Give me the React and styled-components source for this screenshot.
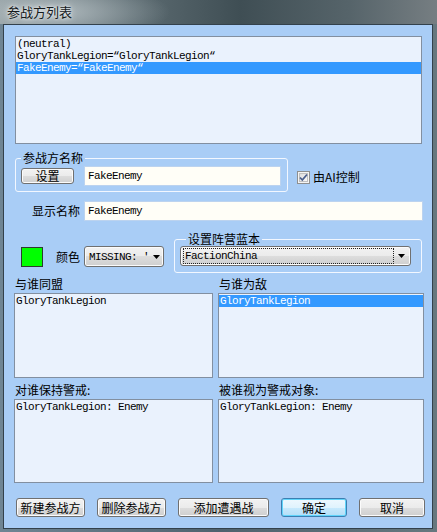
import React from 'react'
import styled, { createGlobalStyle } from 'styled-components'

const GlobalStyle = createGlobalStyle`
  html, body {
    margin: 0;
    padding: 0;
    width: 437px;
    height: 532px;
    overflow: hidden;
  }
  body {
    font-family: "Noto Sans CJK SC", "Liberation Sans", sans-serif;
    font-size: 12px;
    color: #000;
  }
`

const mono = `"Liberation Mono", "Noto Sans CJK SC", monospace`

const Window = styled.div`
  width: 437px;
  height: 532px;
  display: flex;
  flex-direction: column;
  background: linear-gradient(90deg, #6f8594 0%, #4f626e 50%, #66787f 100%);
`

const TitleBar = styled.div`
  height: 24px;
  flex-shrink: 0;
  display: flex;
  align-items: center;
  padding-left: 7px;
  background:
    radial-gradient(ellipse 120px 30px at 50px 12px, rgba(190, 200, 204, 0.8), rgba(190, 200, 204, 0) 100%),
    linear-gradient(90deg, #8b979b 0%, #5d6c72 30%, #3f4e54 55%, #56646a 80%, #767e82 100%);
`

const TitleText = styled.span`
  font-size: 13px;
  line-height: 16px;
  color: #151a1d;
  text-shadow: 0 0 6px rgba(255, 255, 255, 0.9), 0 0 3px rgba(255, 255, 255, 0.8);
`

const Client = styled.div`
  flex: 1;
  margin: 0 4px 3px 3px;
  background: #a9cdf6;
  border: 1px solid #33414c;
  padding: 11px 10px 0 11px;
  display: flex;
  flex-direction: column;
`

const ListBox = styled.div`
  box-sizing: border-box;
  width: ${p => p.$w}px;
  height: ${p => p.$h}px;
  background: #eaf2fd;
  border: 1px solid #828fa0;
  padding: 1px 0;
  font-family: ${mono};
  font-size: 11px;
  letter-spacing: -0.6px;
  overflow: hidden;
`

const ListItem = styled.div`
  height: 12px;
  line-height: 12px;
  padding-left: 1px;
  white-space: pre;
  background: ${p => (p.$selected ? '#3399ff' : 'transparent')};
  color: ${p => (p.$selected ? '#ffffff' : '#000000')};
`

const NameRow = styled.div`
  display: flex;
  align-items: flex-start;
  margin-top: 7px;
`

const GroupBox = styled.fieldset`
  box-sizing: border-box;
  width: ${p => p.$w}px;
  margin: 0;
  min-width: 0;
  border: 1px solid #f2f7ff;
  border-radius: 3px;
  padding: ${p => p.$pad};
  display: flex;
  align-items: center;
`

const Legend = styled.legend`
  margin-left: ${p => p.$offset}px;
  padding: 0 2px;
  line-height: 14px;
  font-size: 12px;
`

const Button = styled.button`
  box-sizing: border-box;
  width: ${p => p.$w}px;
  height: ${p => p.$h || 19}px;
  padding: 0;
  margin: 0;
  flex-shrink: 0;
  font-family: "Noto Sans CJK SC", sans-serif;
  font-size: 12px;
  line-height: 14px;
  color: #000;
  border-radius: 3px;
  border: 1px solid ${p => (p.$default ? '#3c7fb1' : '#707070')};
  box-shadow: inset 0 0 0 1px ${p => (p.$default ? '#5fd4fb' : '#fbfbfb')};
  background: ${p =>
    p.$default
      ? 'linear-gradient(#eef8fe 0%, #e0f3fd 50%, #c8eafd 50%, #b4def6 100%)'
      : 'linear-gradient(#f2f2f2 0%, #ebebeb 50%, #dddddd 50%, #cfcfcf 100%)'};
`

const TextInput = styled.div`
  box-sizing: border-box;
  width: ${p => p.$w}px;
  height: 20px;
  flex-shrink: 0;
  margin-left: ${p => p.$ml || 0}px;
  background: #fffef7;
  border: 1px solid #bcd3ef;
  padding: 3px 3px 0;
  font-family: ${mono};
  font-size: 11px;
  letter-spacing: -0.6px;
  line-height: 13px;
`

const CheckWrap = styled.label`
  display: flex;
  align-items: center;
  gap: 3px;
  margin: 19px 0 0 9px;
  font-size: 12px;
  line-height: 14px;
`

const DisplayRow = styled.div`
  display: flex;
  align-items: center;
  margin-top: 9px;
`

const FieldLabel = styled.span`
  width: ${p => p.$w}px;
  text-align: ${p => p.$align || 'left'};
  flex-shrink: 0;
  font-size: 12px;
  line-height: 14px;
`

const ColorRow = styled.div`
  display: flex;
  align-items: flex-start;
  margin-top: 11px;
`

const ColorSide = styled.div`
  display: flex;
  align-items: center;
  padding: 14px 0 0 6px;
  width: 153px;
  flex-shrink: 0;
`

const Swatch = styled.div`
  box-sizing: border-box;
  width: 22px;
  height: 20px;
  background: #00ff00;
  border: 1px solid #2f3a2f;
  margin-right: 13px;
`

const Combo = styled.div`
  box-sizing: border-box;
  width: ${p => p.$w}px;
  height: ${p => p.$h}px;
  margin-left: ${p => p.$ml || 0}px;
  display: flex;
  align-items: center;
  border: 1px solid #707070;
  border-radius: 3px;
  background: linear-gradient(#f2f2f2 0%, #ebebeb 50%, #dddddd 50%, #cfcfcf 100%);
  box-shadow: inset 0 0 0 1px #fbfbfb;
  padding: 2px 1px 2px 2px;
  font-family: ${mono};
  font-size: 11px;
  letter-spacing: -0.6px;
`

const ComboText = styled.div`
  flex: 1;
  min-width: 0;
  height: 14px;
  line-height: 14px;
  padding-left: 1px;
  white-space: pre;
  overflow: hidden;
  border: 1px ${p => (p.$focus ? 'dotted #222' : 'solid transparent')};
`

const ComboArrow = styled.div`
  width: ${p => p.$w || 15}px;
  flex-shrink: 0;
  display: flex;
  justify-content: center;
  align-items: center;
`

const Pair = styled.div`
  display: grid;
  grid-template-columns: 199px 206px;
  column-gap: 5px;
  margin: ${p => p.$mt}px 0 0 -1px;
`

const Field = styled.div`
  display: flex;
  flex-direction: column;
`

const ListLabel = styled.div`
  font-size: 12px;
  line-height: 14px;
  padding-left: 1px;
  margin-bottom: 2px;
`

const ButtonRow = styled.div`
  display: flex;
  gap: 12px;
  margin: 15px 0 0 1px;
`

const Arrow = () => (
  <svg width="7" height="4" viewBox="0 0 7 4">
    <path d="M0 0 H7 L3.5 4 Z" fill="#000" />
  </svg>
)

const CheckIcon = () => (
  <svg width="13" height="13" viewBox="0 0 13 13">
    <defs>
      <linearGradient id="cb" x1="0" y1="0" x2="1" y2="1">
        <stop offset="0" stopColor="#dcdcdc" />
        <stop offset="1" stopColor="#fbfbfb" />
      </linearGradient>
    </defs>
    <rect x="0.5" y="0.5" width="12" height="12" fill="#f4f4f4" stroke="#8e8f8f" />
    <rect x="2.5" y="2.5" width="8" height="8" fill="url(#cb)" stroke="#c0c0c0" />
    <path d="M3 6.5 L5.3 9 L10 3.5" fill="none" stroke="#4a5f8e" strokeWidth="1.8" />
  </svg>
)

export default function App() {
  return (
    <>
      <GlobalStyle />
      <Window>
        <TitleBar>
          <TitleText>参战方列表</TitleText>
        </TitleBar>
        <Client>
          <ListBox $w={407} $h={108}>
            <ListItem>(neutral)</ListItem>
            <ListItem>GloryTankLegion=“GloryTankLegion“</ListItem>
            <ListItem $selected>FakeEnemy=“FakeEnemy“</ListItem>
          </ListBox>

          <NameRow>
            <GroupBox $w={273} $pad="1px 6px 5px 5px">
              <Legend $offset={0}>参战方名称</Legend>
              <Button $w={53} $h={16}>设置</Button>
              <TextInput $w={197} $ml={10}>FakeEnemy</TextInput>
            </GroupBox>
            <CheckWrap>
              <CheckIcon />
              由AI控制
            </CheckWrap>
          </NameRow>

          <DisplayRow>
            <FieldLabel $w={65} $align="right">显示名称</FieldLabel>
            <TextInput $w={339} $ml={4}>FakeEnemy</TextInput>
          </DisplayRow>

          <ColorRow>
            <ColorSide>
              <Swatch />
              <FieldLabel $w={24}>颜色</FieldLabel>
              <Combo $w={80} $h={21} $ml={4}>
                <ComboText>MISSING: '</ComboText>
                <ComboArrow $w={12}><Arrow /></ComboArrow>
              </Combo>
            </ColorSide>
            <GroupBox $w={248} $pad="0 10px 6px 5px">
              <Legend $offset={6}>设置阵营蓝本</Legend>
              <Combo $w={231} $h={20}>
                <ComboText $focus>FactionChina</ComboText>
                <ComboArrow><Arrow /></ComboArrow>
              </Combo>
            </GroupBox>
          </ColorRow>

          <Pair $mt={4}>
            <Field>
              <ListLabel>与谁同盟</ListLabel>
              <ListBox $w={199} $h={85}>
                <ListItem>GloryTankLegion</ListItem>
              </ListBox>
            </Field>
            <Field>
              <ListLabel>与谁为敌</ListLabel>
              <ListBox $w={206} $h={85}>
                <ListItem $selected>GloryTankLegion</ListItem>
              </ListBox>
            </Field>
          </Pair>

          <Pair $mt={5}>
            <Field>
              <ListLabel>对谁保持警戒:</ListLabel>
              <ListBox $w={199} $h={84}>
                <ListItem>GloryTankLegion: Enemy</ListItem>
              </ListBox>
            </Field>
            <Field>
              <ListLabel>被谁视为警戒对象:</ListLabel>
              <ListBox $w={206} $h={84}>
                <ListItem>GloryTankLegion: Enemy</ListItem>
              </ListBox>
            </Field>
          </Pair>

          <ButtonRow>
            <Button $w={69}>新建参战方</Button>
            <Button $w={69}>删除参战方</Button>
            <Button $w={91}>添加遭遇战</Button>
            <Button $w={66} $default>确定</Button>
            <Button $w={66}>取消</Button>
          </ButtonRow>
        </Client>
      </Window>
    </>
  )
}
